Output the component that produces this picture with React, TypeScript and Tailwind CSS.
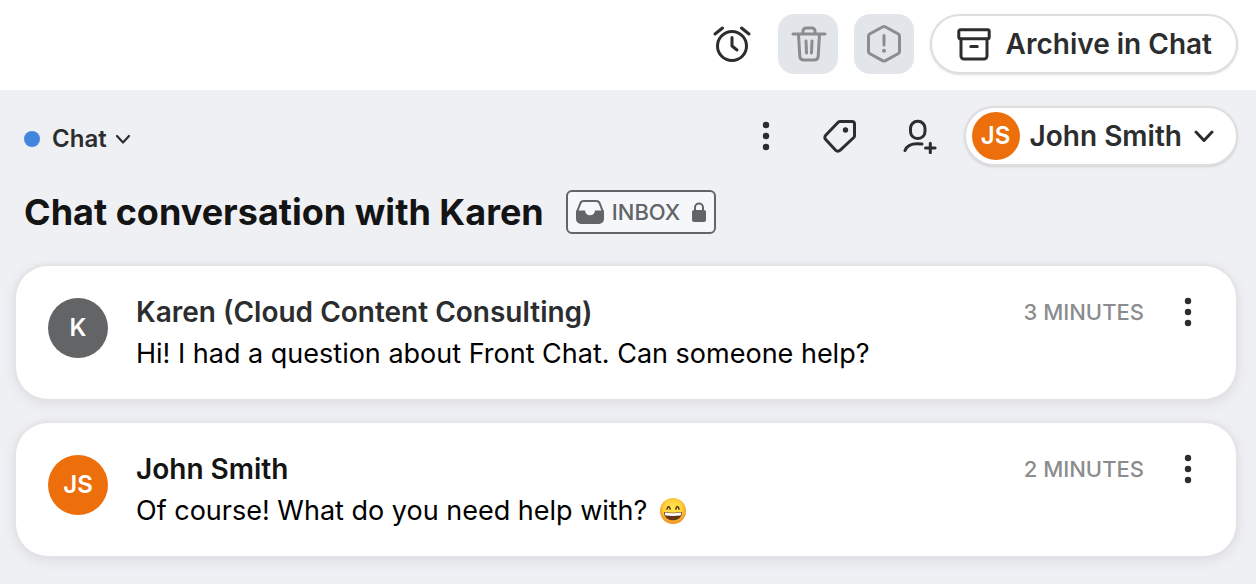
import type { ReactNode } from 'react'

type Message = {
  initials: string
  avatarClass: string
  name: string
  nameClass: string
  text: string
  time: string
  smiley?: boolean
}

const messages: Message[] = [
  {
    initials: 'K',
    avatarClass: 'bg-[#636466]',
    name: 'Karen (Cloud Content Consulting)',
    nameClass: 'text-[#2c2d2e]',
    text: 'Hi! I had a question about Front Chat. Can someone help?',
    time: '3 MINUTES'
  },
  {
    initials: 'JS',
    avatarClass: 'bg-[#ec6f0c]',
    name: 'John Smith',
    nameClass: 'text-[#141414]',
    text: 'Of course! What do you need help with?',
    time: '2 MINUTES',
    smiley: true
  }
]

const Stroke = ({ className, viewBox, children }: { className: string; viewBox: string; children: ReactNode }) => (
  <svg
    className={`shrink-0 ${className}`}
    viewBox={viewBox}
    fill="none"
    stroke="currentColor"
    strokeWidth="3"
    strokeLinecap="round"
    strokeLinejoin="round"
    aria-hidden="true"
  >
    {children}
  </svg>
)

const AlarmIcon = () => (
  <Stroke className="w-10 h-10" viewBox="0 0 40 40">
    <circle cx="20" cy="22" r="14.5" />
    <path d="M20 13.5v8.5l5 4M3 10l7.5-6M37 10l-7.5-6" />
  </Stroke>
)

const TrashIcon = () => (
  <Stroke className="w-10 h-10" viewBox="0 0 40 40">
    <path d="M5 10h32M15 9.5V7a3 3 0 0 1 3-3h6a3 3 0 0 1 3 3v2.5M10.5 10l1.300 22.500a4 4 0 0 0 4 3.500h10.400a4 4 0 0 0 4-3.500L31.500 10M18 17l.5 12M24 17l-.5 12" />
  </Stroke>
)

const SpamIcon = () => (
  <Stroke className="w-10 h-10" viewBox="0 0 40 40">
    <path d="M18.500 3Q20 2.200 21.500 3L34 9.800Q35.500 10.600 35.500 12.200V27.400Q35.500 29 34 29.800L21.500 36.600Q20 37.400 18.500 36.600L6 29.800Q4.500 29 4.500 27.400V12.200Q4.500 10.600 6 9.800ZM20 11.500v9.500" />
    <circle cx="20" cy="26.800" r="2" fill="currentColor" stroke="none" />
  </Stroke>
)

const ArchiveIcon = () => (
  <Stroke className="w-9 h-9" viewBox="0 0 36 36">
    <rect x="2.800" y="3.800" width="30.400" height="9" rx="1.500" />
    <path d="M5 13v17a3 3 0 0 0 3 3h20a3 3 0 0 0 3-3V13M14.800 20.500h6.500" />
  </Stroke>
)

const DotsIcon = () => (
  <svg className="w-2 h-8 shrink-0" viewBox="0 0 8 32" fill="currentColor" aria-hidden="true">
    <circle cx="4" cy="5" r="3.200" />
    <circle cx="4" cy="16" r="3.200" />
    <circle cx="4" cy="27" r="3.200" />
  </svg>
)

const TagIcon = () => (
  <Stroke className="w-9 h-9" viewBox="0 0 36 36">
    <path d="M18 3.500h12a2.500 2.500 0 0 1 2.500 2.500v11.800a2.500 2.500 0 0 1-.7 1.700L18 32.300a3 3 0 0 1-4.300 0L3.700 21.500a3 3 0 0 1 0-4.200L16.200 4.300a2.500 2.500 0 0 1 1.800-.8Z" />
    <circle cx="23.500" cy="12" r="2.700" fill="currentColor" stroke="none" />
  </Stroke>
)

const AddPersonIcon = () => (
  <Stroke className="w-9 h-9" viewBox="0 0 36 36">
    <rect x="8.500" y="3.300" width="14.500" height="17.200" rx="7" />
    <path d="M3 32.500c2-5.200 7-6.800 12-6.800q2.500 0 5 .4M28.300 25.200v9.500M23.500 30h9.600" />
  </Stroke>
)

const InboxIcon = () => (
  <svg className="w-7 h-6 shrink-0" viewBox="0 0 28 24" aria-hidden="true">
    <path
      d="M1 12 4.300 3.400A3.500 3.500 0 0 1 7.600 1h12.800A3.500 3.500 0 0 1 23.700 3.400L27 12"
      fill="none"
      stroke="currentColor"
      strokeWidth="2"
    />
    <path d="M0 10.500h9a5 4.800 0 0 0 10 0h9V19a5 5 0 0 1-5 5H5a5 5 0 0 1-5-5Z" fill="currentColor" />
  </svg>
)

const LockIcon = () => (
  <svg className="w-3.5 h-5 shrink-0" viewBox="0 0 14 20" aria-hidden="true">
    <path d="M3 9V5.500a4 4 0 0 1 8 0V9" fill="none" stroke="currentColor" strokeWidth="2" />
    <rect y="8" width="14" height="12" rx="2" fill="currentColor" />
  </svg>
)

const Smiley = () => (
  <svg className="w-7 h-7 shrink-0" viewBox="0 0 28 28" role="img" aria-label="😄">
    <defs>
      <radialGradient id="face" cx="50%" cy="42%" r="58%">
        <stop offset="0" stopColor="#ffe64f" />
        <stop offset="0.6" stopColor="#ffd23d" />
        <stop offset="1" stopColor="#f28a1c" />
      </radialGradient>
    </defs>
    <circle cx="14" cy="14" r="13" fill="url(#face)" />
    <path d="M8 12q1.600-5 3.200 0M16.800 12q1.600-5 3.200 0" fill="none" stroke="#5f3610" strokeWidth="1.600" strokeLinecap="round" />
    <path d="M5 15q9 1.500 18 0c.3 4.800-3.800 8.300-9 8.300S4.700 19.800 5 15Z" fill="#633617" />
    <path d="M5.800 15.600q8.200 1.300 16.400 0c.1 1.400-.2 2.200-.7 2.900q-7.500.8-15 0c-.5-.7-.8-1.500-.7-2.900Z" fill="#fff" />
  </svg>
)

const App = () => {
  return (
    <div className="min-h-screen bg-[#eff0f4] font-['Inter',sans-serif] text-[#2c2d2e]">
      {/* Toolbar */}
      <header className="flex items-center justify-end gap-4 bg-white pl-6 pr-[18px] pt-3.5 pb-4">
        <button aria-label="Snooze" className="flex items-center justify-center w-15 h-15">
          <AlarmIcon />
        </button>
        <button aria-label="Delete" className="flex items-center justify-center w-15 h-15 rounded-2xl bg-[#e2e5ea] text-[#8b8c8e]">
          <TrashIcon />
        </button>
        <button aria-label="Mark as spam" className="flex items-center justify-center w-15 h-15 rounded-2xl bg-[#e2e5ea] text-[#8b8c8e]">
          <SpamIcon />
        </button>
        <button className="flex items-center gap-3.5 h-15 px-6 rounded-full border-2 border-[#dedede] bg-white text-[28px] font-semibold shadow-sm">
          <ArchiveIcon />
          Archive in Chat
        </button>
      </header>

      {/* Conversation bar */}
      <div className="flex items-center justify-between pl-6 pr-[18px] pt-4">
        <button className="flex items-center pt-1.5 text-2xl font-semibold">
          <span className="w-4 h-4 mr-3 rounded-full bg-[#4285dc]" />
          Chat
          <Stroke className="w-4 h-4 ml-2" viewBox="0 0 16 16">
            <path d="M2 5l6 6.500L14 5" strokeWidth="2.200" />
          </Stroke>
        </button>
        <div className="flex items-center">
          <button aria-label="More actions" className="flex justify-center w-8 mr-10">
            <DotsIcon />
          </button>
          <button aria-label="Tag" className="mr-11">
            <TagIcon />
          </button>
          <button aria-label="Add participant" className="mr-[26px]">
            <AddPersonIcon />
          </button>
          <button className="flex items-center h-15 pl-1.5 pr-[22px] rounded-full border-2 border-[#dedede] bg-white text-[28px] font-semibold shadow-sm">
            <span className="flex items-center justify-center w-12 h-12 mr-2.5 rounded-full bg-[#ec6f0c] text-2xl font-semibold text-white">
              JS
            </span>
            John Smith
            <Stroke className="w-5 h-5 ml-3" viewBox="0 0 20 20">
              <path d="M2 6l8 8.500L18 6" />
            </Stroke>
          </button>
        </div>
      </div>

      {/* Subject */}
      <div className="flex items-center gap-[22px] px-6 pt-6 pb-8">
        <h1 className="text-4xl font-bold text-[#141414]">Chat conversation with Karen</h1>
        <div className="flex items-center h-11 px-2 rounded-md border-2 border-[#636466] bg-[#f6f7fa] text-[#636466] text-[22px] font-medium">
          <InboxIcon />
          <span className="ml-2 mr-3">INBOX</span>
          <LockIcon />
        </div>
      </div>

      {/* Messages */}
      <main className="flex flex-col gap-6 pl-4 pr-5 pb-7">
        {messages.map((message) => (
          <article
            key={message.name}
            className="flex pl-8 pr-11 pt-[25px] pb-6 rounded-[32px] bg-white shadow-[0_0_3px_2px_#e3e3e5,0_3px_12px_2px_#dddee3]"
          >
            <div className={`flex items-center justify-center w-15 h-15 mt-[7px] mr-7 shrink-0 rounded-full text-2xl font-semibold text-white ${message.avatarClass}`}>
              {message.initials}
            </div>
            <div className="flex-1">
              <h2 className={`text-[28px] leading-[42px] font-semibold ${message.nameClass}`}>{message.name}</h2>
              <p className="flex items-center gap-3 text-[27px] leading-[42px] text-black">
                {message.text}
                {message.smiley && <Smiley />}
              </p>
            </div>
            <div className="flex items-center gap-10 h-[42px]">
              <time className="text-[22px] font-medium text-[#8b8c8e]">{message.time}</time>
              <button aria-label="Message options">
                <DotsIcon />
              </button>
            </div>
          </article>
        ))}
      </main>
    </div>
  )
}

export default App
